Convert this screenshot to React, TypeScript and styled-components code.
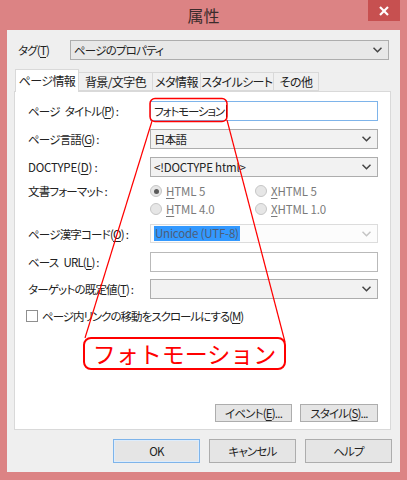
import styled, { createGlobalStyle } from "styled-components";

const GlobalStyle = createGlobalStyle`
  * { box-sizing: border-box; }
  body {
    margin: 0;
    font-family: "Noto Sans CJK JP", "Noto Sans", sans-serif;
    font-size: 11.5px;
    letter-spacing: -0.8px;
    font-feature-settings: "palt" 1;
    color: #222;
  }
`;

const Window = styled.div`
  position: relative;
  width: 407px;
  height: 480px;
  background: #dc8384;
  padding: 0 7px 8px 7px;
  display: flex;
  flex-direction: column;
`;

const TitleBar = styled.div`
  height: 30px;
  display: grid;
  grid-template-columns: 1fr auto 1fr;
  align-items: center;
`;

const TitleText = styled.div`
  grid-column: 2;
  font-size: 16px;
  letter-spacing: 0;
  color: #3b2b2b;
  font-feature-settings: normal;
`;

const CloseButton = styled.div`
  grid-column: 3;
  justify-self: end;
  align-self: start;
  width: 32px;
  height: 21px;
  background: #c75050;
  display: flex;
  align-items: center;
  justify-content: center;
`;

const Client = styled.div`
  flex: 1;
  background: #efefef;
  display: flex;
  flex-direction: column;
  padding: 10px 9px 9px 7px;
`;

const TagRow = styled.div`
  height: 20px;
  display: flex;
  align-items: center;
  padding: 0 2px 0 4px;
`;

const TagLabel = styled.div`
  width: 52px;
`;

const Key = styled.u`
  text-decoration: underline;
  text-underline-offset: 2px;
`;

const Latin = styled.span`
  letter-spacing: -0.2px;
`;

const Gap = styled.span`
  display: inline-block;
  width: 5px;
`;

const SelectBox = styled.div<{ $bg?: string; $disabled?: boolean }>`
  flex: 1;
  height: 100%;
  display: flex;
  align-items: center;
  justify-content: space-between;
  padding: 0 6px 0 3px;
  background: ${(p) => p.$bg ?? "#f2f2f2"};
  border: 1px solid ${(p) => (p.$disabled ? "#dcdcdc" : "#adadad")};
  color: #222;
  white-space: nowrap;
  svg {
    stroke: ${(p) => (p.$disabled ? "#c4c4c4" : "#444")};
  }
`;

const TabStrip = styled.div`
  margin-top: 9px;
  height: 22px;
  display: flex;
  align-items: flex-end;
  padding-left: 1px;
  position: relative;
  z-index: 2;
`;

const Tab = styled.div<{ $w: number; $active?: boolean }>`
  width: ${(p) => p.$w}px;
  height: ${(p) => (p.$active ? 23 : 19)}px;
  margin-bottom: ${(p) => (p.$active ? -1 : 0)}px;
  background: ${(p) => (p.$active ? "#fff" : "#f0f0f0")};
  border: 1px solid #d9d9d9;
  border-bottom: ${(p) => (p.$active ? "none" : "1px solid #d9d9d9")};
  margin-right: -1px;
  display: flex;
  align-items: center;
  justify-content: center;
  font-size: 12px;
  letter-spacing: -0.6px;
  white-space: nowrap;
  overflow: hidden;
  color: #222;
  padding-bottom: ${(p) => (p.$active ? 2 : 0)}px;
`;

const Panel = styled.div`
  height: 339px;
  background: #fff;
  border: 1px solid #d9d9d9;
  display: flex;
  flex-direction: column;
  padding: 9px 12px 7px 13px;
`;

const FieldRow = styled.div<{ $top: number; $h: number }>`
  margin-top: ${(p) => p.$top}px;
  height: ${(p) => p.$h}px;
  display: grid;
  grid-template-columns: 122px 228px;
  align-items: center;
`;

const FieldLabel = styled.div<{ $self?: string }>`
  align-self: ${(p) => p.$self ?? "center"};
  white-space: pre;
  line-height: 18px;
`;

const TextInput = styled.div<{ $focus?: boolean }>`
  height: 100%;
  background: #fff;
  border: 1px solid ${(p) => (p.$focus ? "#7eb4ea" : "#b9b9b9")};
  display: flex;
  align-items: center;
  padding-left: 3px;
  letter-spacing: -1.1px;
`;

const Caret = styled.span`
  display: inline-block;
  width: 1px;
  height: 13px;
  background: #000;
  margin-left: 2px;
`;

const Highlight = styled.span`
  background: #3399ff;
  color: #4d5d78;
  padding: 0 1px;
  line-height: 15px;
  letter-spacing: -0.2px;
`;

const RadioGrid = styled.div`
  display: grid;
  grid-template-columns: 105px 105px;
  grid-auto-rows: 18px;
  align-items: center;
`;

const RadioItem = styled.div`
  display: flex;
  align-items: center;
  gap: 4px;
  color: #7a7a7a;
  letter-spacing: -0.1px;
`;

const RadioCircle = styled.span<{ $checked?: boolean }>`
  width: 12px;
  height: 12px;
  border-radius: 50%;
  border: 1px solid #c6c6c6;
  background: #e6e6e6;
  display: flex;
  align-items: center;
  justify-content: center;
  &::after {
    content: "";
    width: 5px;
    height: 5px;
    border-radius: 50%;
    background: ${(p) => (p.$checked ? "#5a5a5a" : "transparent")};
  }
`;

const CheckRow = styled.div`
  margin-top: 9px;
  height: 16px;
  display: flex;
  align-items: center;
  gap: 4px;
  margin-left: -2px;
  letter-spacing: -1px;
`;

const CheckBox = styled.span`
  width: 12px;
  height: 12px;
  border: 1px solid #8f8f8f;
  background: #fff;
`;

const Callout = styled.div`
  margin: 13px 0 0 55px;
  width: 203px;
  height: 33px;
  border: 2px solid #ff0000;
  border-radius: 8px;
  display: flex;
  align-items: center;
  justify-content: center;
  color: #ff0000;
  font-size: 23px;
  letter-spacing: 0;
  font-feature-settings: normal;
  line-height: 1;
  background: #fff;
`;

const PanelButtons = styled.div`
  margin-top: auto;
  display: flex;
  justify-content: flex-end;
  gap: 8px;
`;

const Button = styled.div<{ $w: number; $h: number; $default?: boolean }>`
  width: ${(p) => p.$w}px;
  height: ${(p) => p.$h}px;
  background: #e5e5e5;
  border: 1px solid ${(p) => (p.$default ? "#7eb4ea" : "#adadad")};
  box-shadow: ${(p) => (p.$default ? "inset 0 0 0 1px #dcecfc" : "none")};
  display: flex;
  align-items: center;
  justify-content: center;
  color: #222;
  white-space: nowrap;
`;

const DialogButtons = styled.div`
  margin-top: 9px;
  margin-right: -1px;
  display: flex;
  justify-content: flex-end;
  gap: 9px;
`;

const Overlay = styled.svg`
  position: absolute;
  left: 0;
  top: 0;
  pointer-events: none;
`;

function Chevron() {
  return (
    <svg width="9" height="6" viewBox="0 0 9 6" fill="none" strokeWidth="1.5">
      <polyline points="0.5,0.8 4.5,4.8 8.5,0.8" />
    </svg>
  );
}

const tabs = [
  { label: "ページ情報", w: 64, active: true },
  { label: "背景/文字色", w: 75 },
  { label: "メタ情報", w: 49 },
  { label: "スタイルシート", w: 74 },
  { label: "その他", w: 46 },
];

export default function App() {
  return (
    <>
      <GlobalStyle />
      <Window>
        <TitleBar>
          <TitleText>属性</TitleText>
          <CloseButton>
            <svg width="10" height="10" viewBox="0 0 10 10" stroke="#fff" strokeWidth="2.2">
              <line x1="1" y1="1" x2="9" y2="9" />
              <line x1="9" y1="1" x2="1" y2="9" />
            </svg>
          </CloseButton>
        </TitleBar>
        <Client>
          <TagRow>
            <TagLabel>
              タグ(<Key>T</Key>)
            </TagLabel>
            <SelectBox $bg="#e8e8e8">
              <span>ページのプロパティ</span>
              <Chevron />
            </SelectBox>
          </TagRow>

          <TabStrip>
            {tabs.map((t) => (
              <Tab key={t.label} $w={t.w} $active={t.active}>
                {t.label}
              </Tab>
            ))}
          </TabStrip>

          <Panel>
            <FieldRow $top={0} $h={20}>
              <FieldLabel>
                ページ<Gap />タイトル(<Key>P</Key>) :
              </FieldLabel>
              <TextInput $focus>
                フォトモーション<Caret />
              </TextInput>
            </FieldRow>
            <FieldRow $top={8} $h={20}>
              <FieldLabel>
                ページ言語(<Key>G</Key>) :
              </FieldLabel>
              <SelectBox>
                <span>日本語</span>
                <Chevron />
              </SelectBox>
            </FieldRow>
            <FieldRow $top={8} $h={20}>
              <FieldLabel>
                <Latin>
                  DOCTYPE(<Key>D</Key>) :
                </Latin>
              </FieldLabel>
              <SelectBox>
                <Latin>{"<!DOCTYPE html>"}</Latin>
                <Chevron />
              </SelectBox>
            </FieldRow>
            <FieldRow $top={5} $h={36}>
              <FieldLabel $self="start">文書フォーマット :</FieldLabel>
              <RadioGrid>
                <RadioItem>
                  <RadioCircle $checked />
                  <span>
                    <Key>H</Key>TML 5
                  </span>
                </RadioItem>
                <RadioItem>
                  <RadioCircle />
                  <span>
                    <Key>X</Key>HTML 5
                  </span>
                </RadioItem>
                <RadioItem>
                  <RadioCircle />
                  <span>
                    <Key>H</Key>TML 4.0
                  </span>
                </RadioItem>
                <RadioItem>
                  <RadioCircle />
                  <span>
                    <Key>X</Key>HTML 1.0
                  </span>
                </RadioItem>
              </RadioGrid>
            </FieldRow>
            <FieldRow $top={6} $h={19}>
              <FieldLabel>
                ページ漢字コード(<Key>O</Key>) :
              </FieldLabel>
              <SelectBox $bg="#fcfcfc" $disabled>
                <Highlight>Unicode (UTF-8)</Highlight>
                <Chevron />
              </SelectBox>
            </FieldRow>
            <FieldRow $top={9} $h={20}>
              <FieldLabel>
                ベース<Gap />URL(<Key>L</Key>) :
              </FieldLabel>
              <TextInput />
            </FieldRow>
            <FieldRow $top={7} $h={20}>
              <FieldLabel>
                ターゲットの既定値(<Key>T</Key>) :
              </FieldLabel>
              <SelectBox>
                <span />
                <Chevron />
              </SelectBox>
            </FieldRow>
            <CheckRow>
              <CheckBox />
              <span>
                ページ内リンクの移動をスクロールにする(<Key>M</Key>)
              </span>
            </CheckRow>
            <Callout>フォトモーション</Callout>
            <PanelButtons>
              <Button $w={77} $h={18}>
                イベント(<Key>E</Key>)...
              </Button>
              <Button $w={78} $h={18}>
                スタイル(<Key>S</Key>)...
              </Button>
            </PanelButtons>
          </Panel>

          <DialogButtons>
            <Button $w={87} $h={24} $default>
              OK
            </Button>
            <Button $w={87} $h={24}>
              キャンセル
            </Button>
            <Button $w={87} $h={24}>
              ヘルプ
            </Button>
          </DialogButtons>
        </Client>
        <Overlay width="407" height="480" viewBox="0 0 407 480" fill="none" stroke="#ff0000">
          <rect x="150" y="98.5" width="77" height="23" rx="5" strokeWidth="1.5" />
          <line x1="152" y1="121" x2="85" y2="338" strokeWidth="1.2" />
          <line x1="227" y1="120" x2="285" y2="342" strokeWidth="1.2" />
        </Overlay>
      </Window>
    </>
  );
}
